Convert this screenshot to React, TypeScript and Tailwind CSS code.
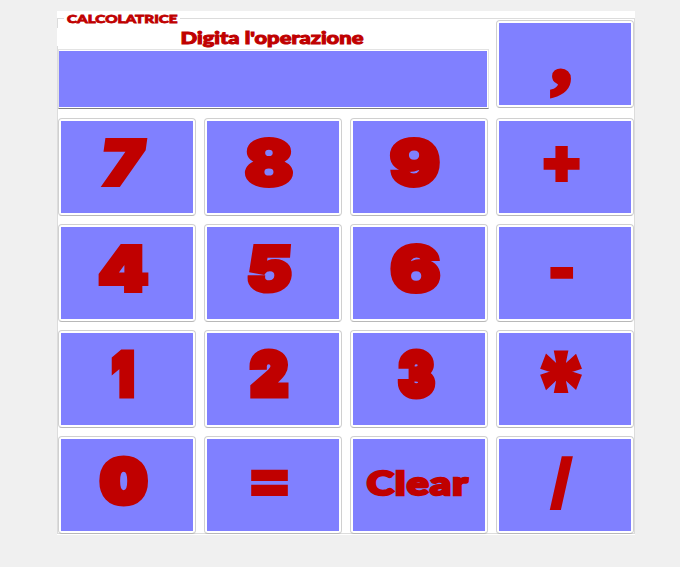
const digit =
  "text-[62px] [-webkit-text-stroke:4px_#c00000] [font-family:Inter,sans-serif]";
const heavyDigit =
  "text-[58px] [-webkit-text-stroke:7px_#c00000] [font-family:Inter,sans-serif]";
const sign =
  "text-[62px] [-webkit-text-stroke:2px_#c00000] [font-family:Inter,sans-serif]";

type KeyDef = { label: string; style: string };

const keys: KeyDef[] = [
  { label: "7", style: `${digit} -translate-y-[4.5px] -translate-x-[0.5px] scale-x-[1.12] -skew-x-[7deg]` },
  { label: "8", style: `${digit} -translate-y-[4.5px] scale-x-[1.15]` },
  { label: "9", style: `${digit} -translate-y-[4.5px] -translate-x-[1px] scale-x-[1.2]` },
  { label: "+", style: `${sign} -translate-y-[7px] scale-[1.04]` },
  { label: "4", style: `${digit} -translate-y-[4.5px] -translate-x-[0.5px] scale-x-[1.16]` },
  { label: "5", style: `${digit} -translate-y-[4.5px] scale-x-[1.1] -skew-x-[4deg]` },
  { label: "6", style: `${digit} -translate-y-[4.5px] -translate-x-[0.5px] scale-x-[1.2]` },
  { label: "-", style: `${digit} -translate-y-[4px] scale-[0.9]` },
  { label: "1", style: `${heavyDigit} -translate-y-[5px] scale-x-[0.8]` },
  { label: "2", style: `${heavyDigit} -translate-y-[5px] -translate-x-[0.5px] scale-x-[0.97]` },
  { label: "3", style: `${heavyDigit} -translate-y-[5px] translate-x-[1px] scale-x-[0.9]` },
  {
    label: "*",
    style:
      "text-[84px] [-webkit-text-stroke:3.5px_#c00000] [font-family:'Liberation_Serif',serif] translate-y-[7px] -translate-x-[1px] scale-x-[1.05] scale-y-[1.2]",
  },
  { label: "0", style: `${heavyDigit} -translate-y-[4.5px] scale-x-[1.1]` },
  { label: "=", style: `${sign} -translate-y-[6px] scale-x-[1.06] scale-y-[0.95]` },
  {
    label: "Clear",
    style:
      "text-[32px] tracking-[1px] [-webkit-text-stroke:2.5px_#c00000] [font-family:Lato,sans-serif] -translate-y-[2px] translate-x-[2px] scale-x-[1.28]",
  },
  { label: "/", style: `${digit} -translate-y-[3.5px] -translate-x-[0.5px] scale-x-[0.77] scale-y-[0.93]` },
];

function Key({ label, style, height }: KeyDef & { height: string }) {
  return (
    <button
      className={`${height} w-[138px] rounded-[4px] border border-[#d0d0d0] border-b-[#b8b8b8] bg-white p-[2px]`}
    >
      <span className="flex h-full items-center justify-center bg-[#8080ff] pr-[7px]">
        <span className={`block leading-none font-black ${style}`}>{label}</span>
      </span>
    </button>
  );
}

export default function App() {
  return (
    <main className="h-[567px] w-[680px] bg-[#f0f0f0] pt-[11px] pl-[57px] text-[#c00000]">
      <section className="h-[524px] w-[578px] bg-white pt-[7px]">
        <div className="relative h-[516px] border border-[#dcdcdc]">
          <h1 className="absolute -top-[8px] left-[6px] h-[16px] w-[116px] bg-white pl-[2.5px] text-[12px] leading-[16px] font-black whitespace-nowrap [-webkit-text-stroke:0.8px_#c00000] [font-family:Lato,sans-serif]">
            <span className="inline-block origin-left scale-x-[1.27]">CALCOLATRICE</span>
          </h1>
          <div className="flex justify-between pt-px">
            <div className="-ml-px w-[432px] pt-[8px]">
              <label
                htmlFor="operation"
                className="block h-[18px] bg-white pr-[2px] text-center text-[17px] leading-[20px] font-black whitespace-nowrap [-webkit-text-stroke:1px_#c00000] [font-family:Lato,sans-serif]"
              >
                <span className="inline-block scale-x-[1.29]">Digita l'operazione</span>
              </label>
              <input
                id="operation"
                readOnly
                className="mt-[3px] ml-px block h-[60px] w-[431px] border border-[#e3e3e3] border-b-[#808080] bg-[#8080ff] shadow-[inset_0_1px_0_#fff,inset_0_-1px_0_#fff,inset_-1px_0_0_#fff] outline-none"
              />
            </div>
            <Key
              label=","
              style="text-[80px] [-webkit-text-stroke:5px_#c00000] [font-family:'Liberation_Serif',serif] translate-y-[-8px]"
              height="h-[88px]"
            />
          </div>
          <div className="mt-[9px] grid grid-cols-4 gap-[8px]">
            {keys.map((key) => (
              <Key key={key.label} {...key} height="h-[98px]" />
            ))}
          </div>
        </div>
      </section>
    </main>
  );
}
